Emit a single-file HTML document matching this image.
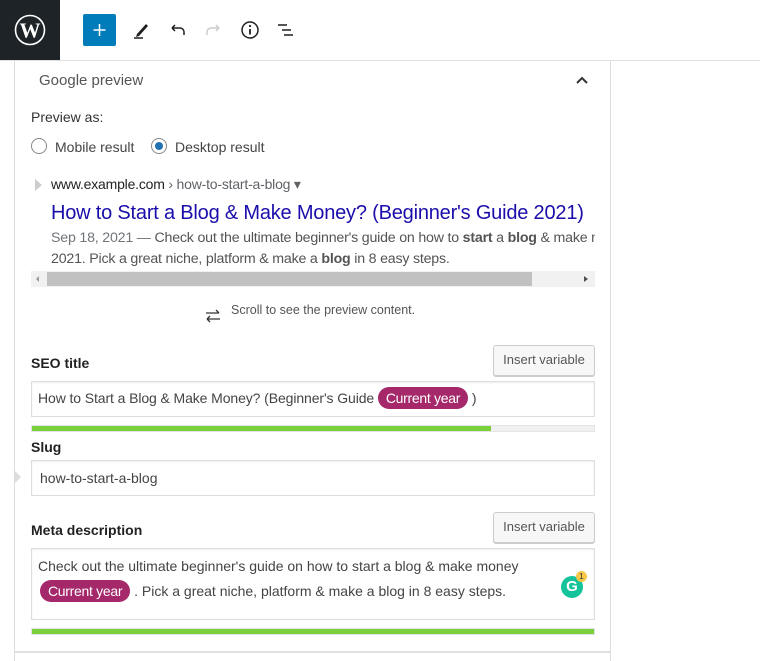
<!DOCTYPE html>
<html><head><meta charset="utf-8"><style>
*{box-sizing:border-box;margin:0;padding:0}
body{width:760px;height:661px;background:#fff;font-family:"Liberation Sans",Arial,sans-serif;position:relative;overflow:hidden;color:#1e1e1e}
.a{position:absolute}
.t{font-size:14px;color:#1e1e1e;white-space:nowrap}
.box{position:absolute;border:1px solid #ddd;background:#fff;box-shadow:inset 0 1px 2px rgba(0,0,0,.07)}
.btn{position:absolute;border:1px solid #ccc;border-radius:3px;background:#f7f7f7;box-shadow:0 1px 0 #ccc;font-size:13px;color:#555;text-align:center;line-height:28px}
.pill{display:inline-block;background:#a4286a;color:#fff;border-radius:12px;padding:0 8px;line-height:22px;font-size:14px;letter-spacing:-0.3px}
</style></head><body>
<div class="a" style="left:0;top:0;width:60px;height:60px;background:#1e2327"></div>
<svg class="a" style="left:14px;top:14px" width="32" height="32" viewBox="0 0 32 32"><circle cx="16" cy="16" r="14.5" fill="none" stroke="#fff" stroke-width="1.6"/><text x="16" y="23.5" text-anchor="middle" font-family="Liberation Serif,serif" font-weight="bold" font-size="21" fill="#fff">W</text></svg>
<div class="a" style="left:0;top:60px;width:760px;height:1px;background:#e0e0e0"></div>
<div class="a" style="left:83px;top:14px;width:33px;height:32px;background:#007cba;border-radius:2px"></div>
<svg class="a" style="left:83px;top:14px" width="33" height="32"><path d="M16.5 10v12M10.5 16h12" stroke="#fff" stroke-width="1.5"/></svg>
<svg class="a" style="left:130px;top:18px" width="24" height="24"><path d="M7 16l9-10 2 2-9 10-3 1z" fill="#1e1e1e"/><path d="M4 20h9" stroke="#1e1e1e" stroke-width="1.5"/></svg>
<svg class="a" style="left:166px;top:18px" width="24" height="24"><path d="M6 10h8a4 4 0 0 1 4 4v3M6 10l3-3M6 10l3 3" fill="none" stroke="#1e1e1e" stroke-width="1.5"/></svg>
<svg class="a" style="left:201px;top:18px" width="24" height="24"><path d="M18 10h-8a4 4 0 0 0-4 4v3M18 10l-3-3M18 10l-3 3" fill="none" stroke="#ccc" stroke-width="1.5"/></svg>
<svg class="a" style="left:238px;top:18px" width="24" height="24"><circle cx="12" cy="12" r="8" fill="none" stroke="#1e1e1e" stroke-width="1.5"/><path d="M12 11v5.5" stroke="#1e1e1e" stroke-width="1.8"/><circle cx="12" cy="8" r="1.1" fill="#1e1e1e"/></svg>
<svg class="a" style="left:274px;top:18px" width="24" height="24"><path d="M4 7h9M8 12h9M10 17h9" stroke="#1e1e1e" stroke-width="1.5"/></svg>
<div class="a" style="left:14px;top:61px;width:1px;height:600px;background:#ddd"></div>
<div class="a" style="left:610px;top:61px;width:1px;height:600px;background:#ddd"></div>
<div class="a" style="left:15px;top:651px;width:595px;height:2px;background:#e0e0e0"></div>
<div class="a t" style="left:39px;top:72px;font-size:15px;color:#555">Google preview</div>
<svg class="a" style="left:574px;top:73px" width="16" height="14"><path d="M3 10l5-5 5 5" fill="none" stroke="#333" stroke-width="2"/></svg>
<div class="a t" style="left:31px;top:109px;color:#333">Preview as:</div>
<div class="a" style="left:31px;top:138px;width:16px;height:16px;border:1px solid #888;border-radius:50%"></div>
<div class="a t" style="left:55px;top:139px;color:#444">Mobile result</div>
<div class="a" style="left:151px;top:138px;width:16px;height:16px;border:1px solid #888;border-radius:50%"></div>
<div class="a" style="left:155px;top:142px;width:8px;height:8px;background:#2271b1;border-radius:50%"></div>
<div class="a t" style="left:175px;top:139px;color:#444">Desktop result</div>
<div class="a" style="left:31px;top:170px;width:564px;height:101px;overflow:hidden">
<svg class="a" style="left:3px;top:8px" width="10" height="14"><path d="M1 1l7 6-7 6z" fill="#ccc"/></svg>
<div class="a t" style="left:20px;top:6px;font-size:14px;color:#222;letter-spacing:-0.2px">www.example.com <span style="color:#5f6368">› how-to-start-a-blog ▾</span></div>
<div class="a t" style="left:20px;top:32px;font-size:20px;color:#1a0dab;letter-spacing:-0.2px">How to Start a Blog &amp; Make Money? (Beginner's Guide 2021)</div>
<div class="a t" style="left:20px;top:60px;font-size:14.2px;color:#545454;letter-spacing:-0.2px"><span style="color:#70757a">Sep 18, 2021 — </span>Check out the ultimate beginner's guide on how to <b>start</b> a <b>blog</b> &amp; make money</div>
<div class="a t" style="left:20px;top:81px;font-size:14.2px;color:#545454;letter-spacing:-0.2px">2021. Pick a great niche, platform &amp; make a <b>blog</b> in 8 easy steps.</div>
</div>
<div class="a" style="left:31px;top:271px;width:564px;height:16px;background:#f1f1f1"></div>
<div class="a" style="left:47px;top:272px;width:485px;height:14px;background:#c1c1c1"></div>
<div class="a" style="left:36px;top:276px;width:0;height:0;border-top:3px solid transparent;border-bottom:3px solid transparent;border-right:3px solid #999"></div>
<div class="a" style="left:584px;top:276px;width:0;height:0;border-top:3px solid transparent;border-bottom:3px solid transparent;border-left:4px solid #505050"></div>
<svg class="a" style="left:204px;top:308px" width="18" height="16"><path d="M2 5h13M12 2l3 3M16 11H3M3 11l3-3M3 11l3 3" fill="none" stroke="#333" stroke-width="1.3"/></svg>
<div class="a t" style="left:231px;top:303px;font-size:12.5px;color:#555">Scroll to see the preview content.</div>
<div class="a t" style="left:31px;top:355px;font-weight:bold;font-size:14px;color:#222">SEO title</div>
<div class="btn" style="left:493px;top:345px;width:102px;height:31px">Insert variable</div>
<div class="box" style="left:31px;top:381px;width:564px;height:36px"></div>
<div class="a t" style="left:38px;top:387px;color:#444;letter-spacing:-0.1px">How to Start a Blog &amp; Make Money? (Beginner's Guide <span class="pill">Current year</span> )</div>
<div class="a" style="left:31px;top:425px;width:564px;height:7px;background:#f0f0f0;border:1px solid #e5e5e5"></div>
<div class="a" style="left:32px;top:426px;width:459px;height:5px;background:#7ad03a"></div>
<div class="a t" style="left:31px;top:439px;font-weight:bold;color:#222">Slug</div>
<svg class="a" style="left:14px;top:469px" width="8" height="16"><path d="M0 1l7 7-7 7z" fill="#ddd"/></svg>
<div class="box" style="left:31px;top:460px;width:564px;height:36px"></div>
<div class="a t" style="left:40px;top:470px;color:#444">how-to-start-a-blog</div>
<div class="a t" style="left:31px;top:522px;font-weight:bold;color:#222">Meta description</div>
<div class="btn" style="left:493px;top:512px;width:102px;height:31px">Insert variable</div>
<div class="box" style="left:31px;top:548px;width:564px;height:72px"></div>
<div class="a t" style="left:38px;top:558px;color:#444">Check out the ultimate beginner's guide on how to start a blog &amp; make money</div>
<div class="a t" style="left:40px;top:580px;color:#444"><span class="pill">Current year</span> . Pick a great niche, platform &amp; make a blog in 8 easy steps.</div>
<div class="a" style="left:561px;top:576px;width:22px;height:22px;border-radius:50%;background:#15c39a"></div>
<div class="a" style="left:561px;top:576px;width:22px;height:22px;color:#fff;font-weight:bold;font-size:15px;text-align:center;line-height:22px">G</div>
<div class="a" style="left:576px;top:571px;width:11px;height:11px;border-radius:50%;background:#f8c84a;font-size:8px;text-align:center;line-height:11px;color:#333">1</div>
<div class="a" style="left:31px;top:628px;width:564px;height:7px;background:#7ad03a;border:1px solid #e5e5e5"></div>
</body></html>
